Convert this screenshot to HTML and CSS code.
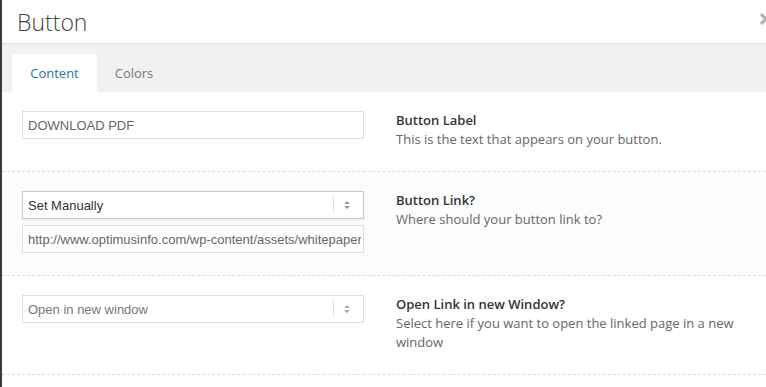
FILE: index.html
```html
<html>

<head>
    <link rel="stylesheet" href="styles.css">
</head>

<body>
    <div class="modal">
        <div class="header">
            <h1>Button</h1>
            <svg class="close" width="14" height="14" viewBox="0 0 14 14">
                <path d="M3 3 L11 11 M11 3 L3 11" stroke="#b4b4b4" stroke-width="3.2" stroke-linecap="round"/>
            </svg>
        </div>
        <div class="tabs">
            <div class="tab active">Content</div>
            <div class="tab">Colors</div>
        </div>
        <div class="rows">
            <div class="row">
                <div class="field">
                    <input type="text" class="text" value="DOWNLOAD PDF">
                </div>
                <div class="info">
                    <div class="label">Button Label</div>
                    <div class="desc">This is the text that appears on your button.</div>
                </div>
            </div>
            <div class="row alt">
                <div class="field">
                    <div class="select strong">
                        <span class="value">Set Manually</span>
                        <span class="sep"></span>
                        <svg width="8" height="10" viewBox="0 0 8 10">
                            <path d="M4 1 L7 4 L1 4 Z M4 9 L7 6 L1 6 Z" fill="#999"/>
                        </svg>
                    </div>
                    <input type="text" class="text" value="http://www.optimusinfo.com/wp-content/assets/whitepapers/download.pdf">
                </div>
                <div class="info">
                    <div class="label">Button Link?</div>
                    <div class="desc">Where should your button link to?</div>
                </div>
            </div>
            <div class="row">
                <div class="field">
                    <div class="select">
                        <span class="value">Open in new window</span>
                        <span class="sep"></span>
                        <svg width="8" height="10" viewBox="0 0 8 10">
                            <path d="M4 1 L7 4 L1 4 Z M4 9 L7 6 L1 6 Z" fill="#aaa"/>
                        </svg>
                    </div>
                </div>
                <div class="info">
                    <div class="label">Open Link in new Window?</div>
                    <div class="desc">Select here if you want to open the linked page in a new window</div>
                </div>
            </div>
        </div>
    </div>
</body>

</html>
```

FILE: styles.css
```css
body {
    margin: 0;
    background: #3a3a3a;
    font-family: 'Open Sans', sans-serif;
    font-size: 13px;
    overflow: hidden;
}
.modal {
    margin-left: 2px;
    height: 387px;
    background: #fff;
}
.header {
    position: relative;
    height: 43px;
    border-bottom: 1px solid #dddddd;
    overflow: hidden;
}
h1 {
    margin: 0;
    padding: 7px 0 0 15px;
    font-size: 23px;
    font-weight: 300;
    color: #444;
    line-height: 30px;
}
.close {
    position: absolute;
    right: -7px;
    top: 12px;
}
.tabs {
    display: flex;
    height: 48px;
    padding: 10px 0 0 10px;
    box-sizing: border-box;
    background: #f1f1f1;
}
.tab {
    width: 85px;
    text-align: center;
    line-height: 38px;
    color: #777;
}
.tab.active {
    background: #fff;
    color: #1e77a7;
}
.tab + .tab {
    width: 74px;
}
.row {
    display: grid;
    grid-template-columns: 342px 1fr;
    column-gap: 32px;
    padding: 19px 16px 22px 20px;
    border-bottom: 1px dashed #dddddd;
}
.row.alt {
    background: #fcfcfc;
}
.field {
    display: flex;
    flex-direction: column;
    gap: 6px;
}
.text {
    height: 28px;
    width: 342px;
    box-sizing: border-box;
    border: 1px solid #dddddd;
    padding: 0 2px 0 5px;
    font-family: 'Liberation Sans', Arial, sans-serif;
    font-size: 13px;
    color: #666;
    background: #fff;
    outline: none;
}
.select {
    display: flex;
    align-items: center;
    height: 28px;
    box-sizing: border-box;
    border: 1px solid #dddddd;
    padding: 0 0 0 5px;
    font-family: 'Liberation Sans', Arial, sans-serif;
    font-size: 13px;
    color: #777;
    background: #fff;
}
.select.strong {
    border-color: #c8c8c8;
    color: #333;
    box-shadow: 0 1px 2px rgba(0, 0, 0, 0.08);
}
.select .value {
    flex: 1;
}
.select .sep {
    width: 1px;
    height: 16px;
    background: #dddddd;
    margin-right: 9px;
}
.select svg {
    margin-right: 12px;
}
.info {
    line-height: 19px;
}
.label {
    font-weight: 600;
    color: #333;
}
.desc {
    color: #666;
}
```
